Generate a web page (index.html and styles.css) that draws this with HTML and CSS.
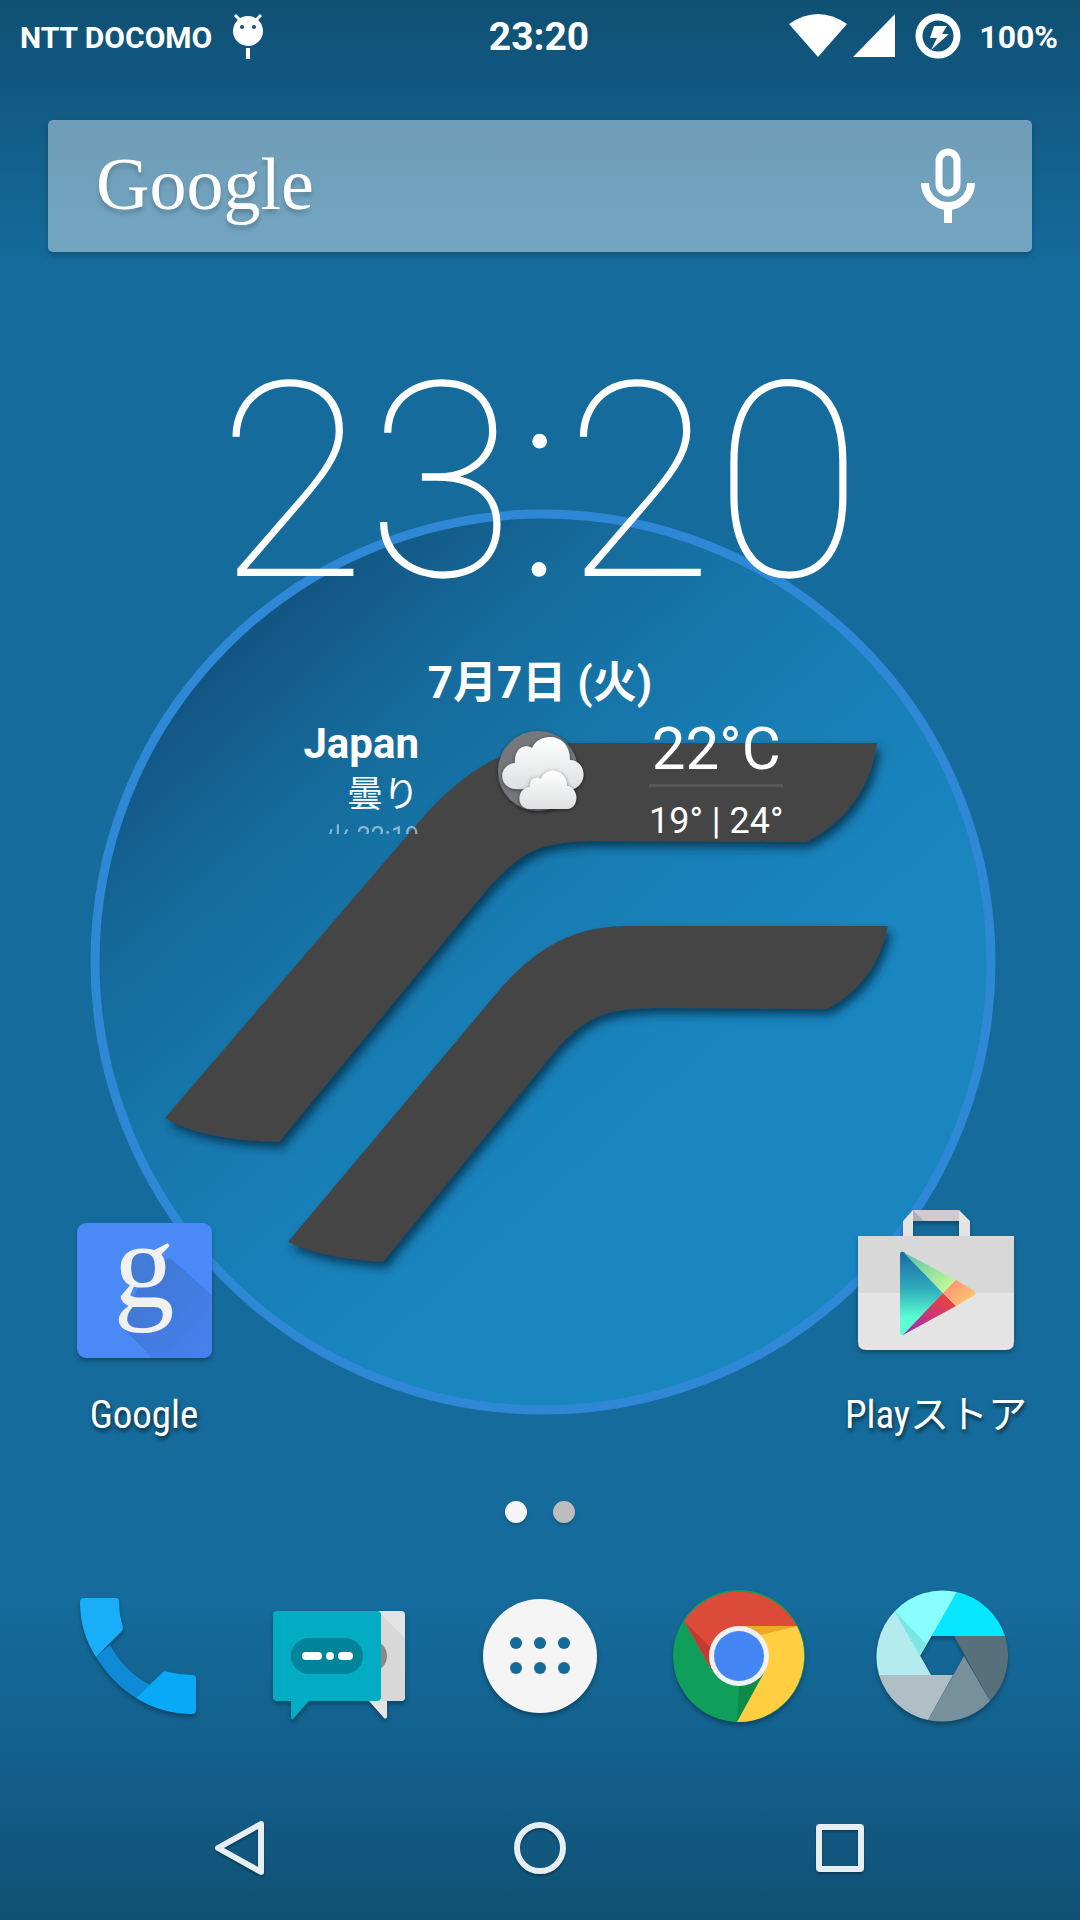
FILE: index.html
```html
<!DOCTYPE html>
<html lang="ja">
<head>
  <meta charset="UTF-8" />
  <meta name="viewport" content="width=device-width, initial-scale=1" />
  <title>Home</title>
  <link rel="stylesheet" href="styles.css">
</head>
<body>
  <!-- Wallpaper -->
  <svg class="wallpaper" viewBox="0 0 1080 1920" preserveAspectRatio="xMidYMid slice" aria-hidden="true">
    <defs>
      <linearGradient id="disc" gradientUnits="userSpaceOnUse" x1="225" y1="627" x2="660" y2="1110">
        <stop offset="0" stop-color="#125280" />
        <stop offset="0.26" stop-color="#156a9a" />
        <stop offset="0.6" stop-color="#177bb1" />
        <stop offset="1" stop-color="#1986c0" />
      </linearGradient>
      <filter id="stripe-shadow" x="-10%" y="-10%" width="120%" height="120%">
        <feDropShadow dx="4" dy="6" stdDeviation="5" flood-color="#06263f" flood-opacity="0.75" />
      </filter>
    </defs>
    <circle cx="543" cy="962" r="448" fill="url(#disc)" stroke="#2f88d5" stroke-width="9" />
    <g fill="#444" filter="url(#stripe-shadow)">
      <path d="M571 743H877Q867 811 806 842L593 841C540 842 524 850 489 887L279 1142Q201 1140 165 1118L418 823C462 772 505 743 571 743Z" />
      <path d="M630 926H888Q877 982 827 1009L672 1008C612 1008 592 1010 556 1050L383 1262Q320 1258 288 1242L501 988C545 938 585 926 630 926Z" />
    </g>
  </svg>

  <!-- Status bar -->
  <header class="status-bar">
    <div class="status-left">
      <span class="carrier">NTT DOCOMO</span>
      <svg width="32" height="48" viewBox="0 0 32 48" aria-hidden="true">
        <path d="M3 2l6 6M29 2l-6 6" stroke="#fff" stroke-width="3" />
        <circle cx="16" cy="18" r="15" fill="#fff" />
        <circle cx="10" cy="14" r="2" fill="#115377" />
        <circle cx="22" cy="14" r="2" fill="#115377" />
        <path d="M14 35h4v11h-4z" fill="#fff" />
      </svg>
    </div>
    <time class="status-time">23:20</time>
    <div class="status-right">
      <svg width="108" height="48" viewBox="0 0 108 48" fill="#fff" aria-hidden="true">
        <path d="M0 11Q29 -9 58 11L29 44Z" />
        <path d="M64 44L106 1V44Z" />
      </svg>
      <svg width="46" height="48" viewBox="0 0 46 48" aria-hidden="true">
        <circle cx="23" cy="23" r="19" fill="none" stroke="#fff" stroke-width="7" />
        <path d="M19 13h13l-5 8h7L16 37l6-12h-7z" fill="#fff" />
      </svg>
      <span class="battery">100%</span>
    </div>
  </header>

  <main class="home">
    <div class="search">
      <button type="button" class="search-logo">Google</button>
      <button type="button" class="search-mic" aria-label="音声検索">
        <svg width="54" height="76" viewBox="0 0 54 76" fill="none" stroke="#fff">
          <rect x="18" y="4" width="18" height="41" rx="9" stroke-width="7" />
          <path d="M4 35a23 23 0 0 0 46 0M27 58v17" stroke-width="8" />
        </svg>
      </button>
    </div>

    <section class="clock">
      <time class="clock-time">23:20</time>
      <div class="clock-date">7月7日 (火)</div>
      <div class="weather">
        <div class="weather-place">
          <div class="city">Japan</div>
          <div class="condition">曇り</div>
          <div class="updated">火 22:19</div>
        </div>
        <svg class="weather-icon" width="92" height="92" viewBox="0 0 92 92" aria-hidden="true">
          <defs>
            <linearGradient id="cloud" x1="0" y1="0" x2="0" y2="1">
              <stop offset="0" stop-color="#fff" />
              <stop offset="1" stop-color="#dddfe0" />
            </linearGradient>
            <filter id="cloud-shadow" x="-20%" y="-20%" width="140%" height="140%">
              <feDropShadow dx="0" dy="1" stdDeviation="2" flood-color="#000" flood-opacity="0.5" />
            </filter>
          </defs>
          <circle cx="44" cy="42" r="40" fill="#77787c" filter="url(#cloud-shadow)" />
          <path d="M21 60C4 58 4 36 21 34C20 20 30 14 38 19C46 2 76 4 76 31C94 32 94 58 76 61Z" fill="url(#cloud)" filter="url(#cloud-shadow)" />
          <path d="M36 80C22 80 22 59 36 58C35 50 42 47 47 50C53 36 73 41 73 57C86 59 85 80 73 80Z" fill="url(#cloud)" filter="url(#cloud-shadow)" />
        </svg>
        <div class="weather-temp">
          <div class="temp-now">22°C</div>
          <div class="temp-range">19° | 24°</div>
        </div>
      </div>
    </section>

    <nav class="apps">
      <a href="#google" class="app">
        <svg width="156" height="156" viewBox="0 0 156 156" aria-hidden="true">
          <defs>
            <linearGradient id="g-shade" x1="0" y1="0" x2="1" y2="1">
              <stop offset="0" stop-color="#3f76cf" />
              <stop offset="1" stop-color="#4681ee" />
            </linearGradient>
          </defs>
          <rect x="11" y="15" width="135" height="135" rx="9" fill="#4b8af6" />
          <path d="M104 50L146 87V141Q146 150 137 150H86L58 121L78 60Z" fill="url(#g-shade)" />
          <ellipse cx="78" cy="62" rx="16" ry="18" fill="#437cd6" />
          <text class="g-glyph" x="78" y="99" text-anchor="middle">g</text>
        </svg>
        <span class="app-label">Google</span>
      </a>
      <a href="#play" class="app app-last">
        <svg width="156" height="156" viewBox="0 0 156 156" aria-hidden="true">
          <defs>
            <linearGradient id="play-blue" x1="0" y1="0" x2="0" y2="1">
              <stop offset="0" stop-color="#1c68a8" />
              <stop offset="0.45" stop-color="#30aebb" />
              <stop offset="0.8" stop-color="#5cffd3" />
            </linearGradient>
            <linearGradient id="play-green" x1="0" y1="0" x2="1" y2="1">
              <stop offset="0" stop-color="#4fc3a6" />
              <stop offset="1" stop-color="#d6ff98" />
            </linearGradient>
            <linearGradient id="play-red" x1="0" y1="1" x2="1" y2="0">
              <stop offset="0" stop-color="#9c27c0" />
              <stop offset="0.8" stop-color="#e54048" />
            </linearGradient>
            <linearGradient id="play-orange" x1="0" y1="0" x2="1" y2="1">
              <stop offset="0" stop-color="#ff8a73" />
              <stop offset="1" stop-color="#ffd270" />
            </linearGradient>
          </defs>
          <path d="M45 28V13L55 2H101L112 13V28H101V13H55V28Z" fill="#e4e4e4" />
          <path d="M55 2H101V13H66Z" fill="#cdcdcd" />
          <path d="M55 2L66 13H55Z" fill="#b0b0b0" />
          <path d="M0 28H156V85H0Z" fill="#d8d8d8" />
          <path d="M0 85H156V134Q156 142 148 142H8Q0 142 0 134Z" fill="#e4e4e4" />
          <path d="M42 46Q42 43 46 44L85 85L46 127Q42 128 42 124Z" fill="url(#play-blue)" />
          <path d="M45 44L98 72L85 85Z" fill="url(#play-green)" />
          <path d="M45 127L85 85L98 98Z" fill="url(#play-red)" />
          <path d="M98 72L115 82Q120 85 115 88L98 98L85 85Z" fill="url(#play-orange)" />
        </svg>
        <span class="app-label">Playストア</span>
      </a>
    </nav>

    <div class="pages">
      <span class="page-dot active"></span>
      <span class="page-dot"></span>
    </div>

    <nav class="dock">
      <a href="#phone" aria-label="電話">
        <svg width="144" height="144" viewBox="0 0 144 144">
          <path d="M44 61Q58 87 84 101L70 114Q47 100 30 73Z" fill="#0f8ad6" />
          <path d="M18 14H50Q53 14 53 17Q53 31 57 43Q57 46 55 48L30 73Q14 48 14 18Q14 14 18 14Z" fill="#18aef8" />
          <path d="M70 114L96 89Q98 86 102 88Q114 91 126 91Q130 91 130 95V126Q130 130 126 130Q96 130 70 114Z" fill="#08a9f6" />
        </svg>
      </a>
      <a href="#messages" aria-label="メッセージ">
        <svg width="144" height="144" viewBox="0 0 144 144">
          <path d="M90 27H134Q138 27 138 31V113Q138 117 134 117H120V133Q119 136 117 134L102 117H90Z" fill="#e4e4e4" />
          <path d="M112 28L138 54V113Q138 117 134 117H114Z" fill="#d8d8d8" />
          <circle cx="104" cy="72" r="16" fill="#888" />
          <path d="M10 27H110Q114 27 114 31V113Q114 117 110 117H42L26 135Q24 136 24 133V117H10Q6 117 6 113V31Q6 27 10 27Z" fill="#02acc3" />
          <rect x="24" y="54" width="72" height="36" rx="18" fill="#008499" />
          <rect x="35" y="68" width="20" height="8" rx="4" fill="#fff" />
          <circle cx="63" cy="72" r="4" fill="#fff" />
          <rect x="71" y="68" width="15" height="8" rx="4" fill="#fff" />
        </svg>
      </a>
      <button type="button" aria-label="アプリ">
        <svg width="144" height="144" viewBox="0 0 144 144">
          <circle cx="72" cy="72" r="57" fill="#f5f5f5" />
          <g fill="#156a98">
            <circle cx="48" cy="59" r="6" />
            <circle cx="72" cy="59" r="6" />
            <circle cx="96" cy="59" r="6" />
            <circle cx="48" cy="84" r="6" />
            <circle cx="72" cy="84" r="6" />
            <circle cx="96" cy="84" r="6" />
          </g>
        </svg>
      </button>
      <a href="#chrome" aria-label="Chrome">
        <svg width="144" height="144" viewBox="2 0 144 144">
          <circle cx="72" cy="72" r="66" fill="#109f5a" />
          <path d="M72 100L98 87L82 116L70 138Z" fill="#0b8a4a" />
          <path d="M130 42A66 66 0 0 1 70 138L98 87L72 72V42Z" fill="#ffce41" />
          <path d="M78 42H130L94 51Z" fill="#e9aa28" />
          <path d="M17 37A66 66 0 0 1 130 42H72V72L44 85Z" fill="#dc4a3a" />
          <path d="M17 37L46 66L44 84Z" fill="#c53a2e" />
          <circle cx="72" cy="72" r="30" fill="#f1f1f1" />
          <circle cx="72" cy="72" r="25" fill="#4486f4" />
        </svg>
      </a>
      <a href="#camera" aria-label="カメラ">
        <svg width="144" height="144" viewBox="0 0 144 144">
          <path d="M87 8A66 66 0 0 1 135 52H61Z" fill="#06e6ff" />
          <path d="M135 52A66 66 0 0 1 120 117L84 52Z" fill="#58707b" />
          <path d="M120 117A66 66 0 0 1 58 136L94 72Z" fill="#78909c" />
          <path d="M58 136A66 66 0 0 1 9 91H83Z" fill="#b0bec5" />
          <path d="M9 91A66 66 0 0 1 25 27L61 91Z" fill="#b4ebef" />
          <path d="M25 27A66 66 0 0 1 87 8L50 72Z" fill="#88fffe" />
          <path d="M25 27L56 60L50 70Z" fill="#7be6e6" />
        </svg>
      </a>
    </nav>
  </main>

  <!-- Navigation bar -->
  <footer class="nav-bar">
    <button type="button" aria-label="戻る">
      <svg width="60" height="60" viewBox="0 0 60 60">
        <path d="M51 6V54L8 30Z" />
      </svg>
    </button>
    <button type="button" aria-label="ホーム">
      <svg width="60" height="60" viewBox="0 0 60 60">
        <circle cx="30" cy="30" r="23" />
      </svg>
    </button>
    <button type="button" aria-label="最近">
      <svg width="60" height="60" viewBox="0 0 60 60">
        <rect x="9" y="9" width="42" height="42" rx="1" />
      </svg>
    </button>
  </footer>
</body>
</html>
```
FILE: styles.css
```css
* {
  box-sizing: border-box;
}

body {
  margin: 0;
  min-height: 100vh;
  display: flex;
  flex-direction: column;
  position: relative;
  background: #156c9c;
  color: #fff;
  font-family: Roboto, "Noto Sans CJK JP", sans-serif;
}

/* darker scrims behind the status bar and the dock */
body::before {
  content: "";
  position: absolute;
  inset: 0;
  background:
    linear-gradient(to bottom, #105073, #115a84 100px, rgba(21, 108, 156, 0) 270px),
    linear-gradient(to top, #105073, #125d88 130px, rgba(21, 108, 156, 0) 330px);
}

svg {
  display: block;
}

button {
  padding: 0;
  border: none;
  background: none;
  color: inherit;
  font: inherit;
  cursor: pointer;
}

a {
  color: inherit;
  text-decoration: none;
}

.wallpaper {
  position: absolute;
  inset: 0;
  width: 100%;
  height: 100%;
}

.status-bar,
.home,
.nav-bar {
  position: relative;
}

/* Status bar */
.status-bar {
  display: grid;
  grid-template-columns: 1fr auto 1fr;
  align-items: center;
  height: 74px;
  padding: 0 22px 0 20px;
  font-weight: 700;
}

.status-left,
.status-right {
  display: flex;
  align-items: center;
}

.status-left {
  gap: 20px;
}

.status-right {
  gap: 18px;
  justify-content: flex-end;
}

.carrier {
  font-size: 30px;
}

.battery {
  font-size: 32px;
}

.status-time {
  font-size: 39px;
}

.home {
  flex: 1;
  display: flex;
  flex-direction: column;
  padding-top: 46px;
}

/* Search */
.search {
  display: flex;
  align-items: center;
  justify-content: space-between;
  height: 132px;
  margin: 0 48px;
  padding: 0 57px 0 48px;
  border-radius: 5px;
  background: rgba(255, 255, 255, 0.4);
  box-shadow: 0 4px 6px rgba(0, 0, 0, 0.2);
}

.search-logo {
  padding-bottom: 4px;
  font-family: "Liberation Serif", serif;
  font-size: 74px;
  line-height: 80px;
  text-shadow: 0 4px 4px rgba(0, 0, 0, 0.2);
}

/* Clock widget */
.clock {
  margin-top: 111px;
  text-align: center;
}

.clock-time {
  display: block;
  font-size: 273px;
  font-weight: 100;
  line-height: 240px;
}

.clock-date {
  margin-top: 50px;
  font-size: 44px;
  font-weight: 700;
  line-height: 60px;
}

.weather {
  display: grid;
  grid-template-columns: 1fr 218px 1fr;
  align-items: start;
}

.weather-place {
  height: 121px;
  padding: 6px 12px 0 0;
  overflow: hidden;
  text-align: right;
}

.city {
  font-size: 42px;
  font-weight: 700;
  line-height: 50px;
}

.condition {
  font-size: 36px;
  line-height: 52px;
}

.updated {
  font-size: 25px;
  line-height: 32px;
  opacity: 0.5;
}

.weather-icon {
  justify-self: center;
  margin-top: 16px;
}

.weather-temp {
  justify-self: start;
}

.temp-now {
  font-size: 60px;
  line-height: 71px;
}

.temp-range {
  padding-top: 14px;
  border-top: 3px solid rgba(255, 255, 255, 0.1);
  font-size: 36px;
  line-height: 40px;
}

/* Home screen apps */
.apps {
  display: grid;
  grid-template-columns: repeat(5, 1fr);
  margin-top: auto;
  padding: 0 45px;
}

.app {
  display: flex;
  flex-direction: column;
  align-items: center;
}

.app svg,
.dock svg {
  filter: drop-shadow(0 3px 2px rgba(0, 0, 0, 0.3));
}

.app-last {
  grid-column: 5;
}

.app-label {
  margin-top: 25px;
  font-family: "Roboto Condensed", "Liberation Sans Narrow", Roboto, "Noto Sans CJK JP", sans-serif;
  font-size: 39px;
  line-height: 52px;
  white-space: nowrap;
  text-shadow: 1px 3px 4px rgba(0, 0, 0, 0.6);
}

.g-glyph {
  fill: #f1f1f1;
  font-family: "Liberation Serif", serif;
  font-size: 122px;
}

.pages {
  display: flex;
  justify-content: center;
  gap: 26px;
  margin: 60px 0 61px;
}

.page-dot {
  width: 22px;
  height: 22px;
  border-radius: 50%;
  background: #bdbdbd;
  box-shadow: 0 2px 3px rgba(0, 0, 0, 0.2);
}

.page-dot.active {
  background: #f5f5f5;
}

.dock {
  display: grid;
  grid-template-columns: repeat(5, 1fr);
  justify-items: center;
  margin-bottom: 48px;
  padding: 0 38px;
}

/* Navigation bar */
.nav-bar {
  display: grid;
  grid-template-columns: repeat(3, 1fr);
  place-items: center;
  height: 144px;
  padding: 0 90px;
}

.nav-bar svg {
  fill: none;
  stroke: #e7eef2;
  stroke-width: 6px;
  stroke-linejoin: round;
  filter: drop-shadow(0 2px 1px rgba(0, 0, 0, 0.3));
}
```
